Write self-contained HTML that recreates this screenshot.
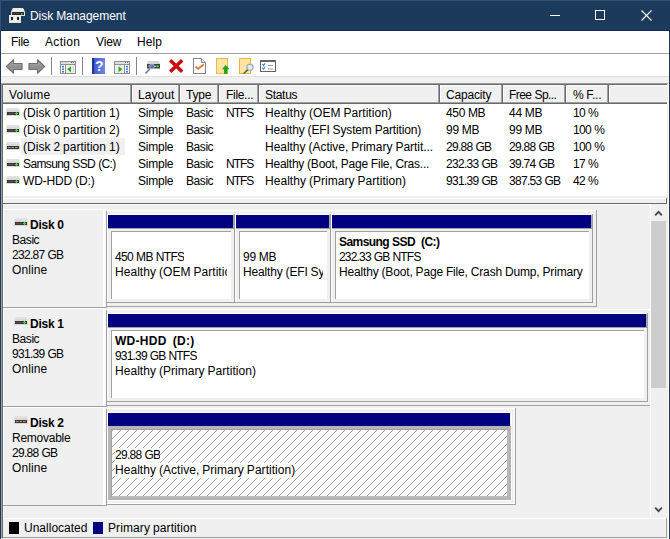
<!DOCTYPE html>
<html><head><meta charset="utf-8"><title>Disk Management</title>
<style>
html,body{margin:0;padding:0;}
body{width:670px;height:539px;position:relative;overflow:hidden;background:#f0f0f0;font-family:"Liberation Sans",sans-serif;font-size:12px;color:#000;}
.a{position:absolute;}
.t{position:absolute;white-space:pre;line-height:14px;height:14px;}
.b{font-weight:bold;}
#title{left:0;top:0;width:670px;height:31px;background:#1c3a5c;box-sizing:border-box;border-top:1px solid #36506f;border-left:1px solid #36506f;border-bottom:1px solid #102e54;}
#menu{left:1px;top:31px;width:668px;height:22px;background:#fff;}
#tool{left:1px;top:54px;width:668px;height:22px;background:#fff;}
.sep{position:absolute;top:57px;width:1px;height:18px;background:#868686;}
.hc{position:absolute;top:85px;height:17px;border-right:1px solid #a0a0a0;box-shadow:1px 0 0 #fff;box-sizing:border-box;}
.navy{position:absolute;background:#000080;height:13px;}
.pbox{position:absolute;background:#fff;border:1px solid #a0a0a0;box-sizing:border-box;}
.lab{position:absolute;left:4px;width:101px;height:96px;background:#f0f0f0;}
</style></head><body>

<div id="title" class="a"></div>
<svg class="a" style="left:8px;top:7px" width="18" height="17" viewBox="0 0 18 17">
<path d="M5 1h10l2 4v4H3V5z" fill="#e4e4e4"/><path d="M5 1h10l1.500 3.500h-13z" fill="#ececec"/><rect x="4" y="5" width="12" height="3" fill="#2e2b2b"/><rect x="6" y="6" width="1" height="1" fill="#3d6fb0"/><rect x="8" y="6" width="3" height="1" fill="#5a4a44"/><rect x="13" y="6" width="1.500" height="1.500" fill="#38e038"/>
<rect x="1" y="8" width="12" height="8" fill="#e6e6e6"/><rect x="1" y="8" width="12" height="1" fill="#f4f4f4"/><rect x="3" y="10" width="2" height="3" fill="#2a2420"/><rect x="9" y="10" width="2" height="3" fill="#2a2420"/><rect x="5.500" y="10" width="3" height="5" fill="#f2f2f2"/></svg>
<div class="t" style="left:30px;top:9px;color:#fff;font-size:12px;letter-spacing:-0.051px;word-spacing:-0.285px">Disk Management</div>
<div class="a" style="left:550px;top:15px;width:10px;height:1px;background:#fff"></div>
<div class="a" style="left:595px;top:10px;width:8px;height:8px;border:1px solid #fff"></div>
<svg class="a" style="left:641px;top:10px" width="11" height="11" viewBox="0 0 11 11"><path d="M0.5 0.5L10.5 10.5M10.5 0.5L0.5 10.5" stroke="#fff" stroke-width="1.1" fill="none"/></svg>
<div class="a" style="left:0;top:31px;width:1px;height:508px;background:#1b395b"></div><div class="a" style="left:669px;top:31px;width:1px;height:508px;background:#1b395b"></div>
<div id="menu" class="a"></div>
<div class="t" style="left:11px;top:35px;letter-spacing:-0.304px">File</div>
<div class="t" style="left:45px;top:35px;letter-spacing:0.314px">Action</div>
<div class="t" style="left:96px;top:35px;letter-spacing:-0.155px">View</div>
<div class="t" style="left:137px;top:35px;letter-spacing:0.122px">Help</div>
<div class="a" style="left:1px;top:53px;width:668px;height:1px;background:#a0a0a0"></div>
<div id="tool" class="a"></div>
<div class="sep" style="left:51px"></div>
<div class="sep" style="left:82px"></div>
<div class="sep" style="left:136px"></div>
<svg class="a" style="left:5px;top:58px" width="19" height="17" viewBox="0 0 19 17"><defs><linearGradient id="ga" x1="0" y1="0" x2="0" y2="1"><stop offset="0" stop-color="#b4b4b4"/><stop offset="0.55" stop-color="#8e8e8e"/><stop offset="1" stop-color="#a4a4a4"/></linearGradient></defs><path d="M8.500 1.800L1.500 8.500L8.500 15.200V11.500H17V5.500H8.500z" fill="url(#ga)" stroke="#707070" stroke-width="1.200" stroke-linejoin="round"/></svg>
<svg class="a" style="left:28px;top:58px" width="19" height="17" viewBox="0 0 19 17"><path d="M9.500 1.800L16.500 8.500L9.500 15.200V11.500H1V5.500H9.500z" fill="url(#ga)" stroke="#707070" stroke-width="1.200" stroke-linejoin="round"/></svg>
<svg class="a" style="left:60px;top:61px" width="16" height="13" viewBox="0 0 16 13"><rect x="0.500" y="0.500" width="15" height="12" fill="#fff" stroke="#8a918f"/><rect x="1" y="1" width="14" height="2" fill="#dedede"/><rect x="11" y="1" width="1" height="1" fill="#777"/><rect x="13" y="1" width="1" height="1" fill="#777"/><rect x="1" y="3" width="14" height="1" fill="#8a918f"/><rect x="5" y="4" width="1" height="8" fill="#8a918f"/><rect x="6" y="4" width="9" height="8" fill="#efefef"/><rect x="2" y="5" width="2" height="1.500" fill="#3a78d8"/><rect x="2" y="7.500" width="2" height="1.500" fill="#3a78d8"/><rect x="2" y="10" width="2" height="1.500" fill="#3a78d8"/><path d="M11 5.200v6l-3.800-3z" fill="#21aa21"/><rect x="13" y="5" width="1" height="6" fill="#d0d0d0"/></svg>
<svg class="a" style="left:92px;top:58px" width="13" height="16" viewBox="0 0 13 16"><defs><linearGradient id="gh" x1="0" y1="0" x2="1" y2="0"><stop offset="0" stop-color="#2a3c9e"/><stop offset="0.250" stop-color="#4460d0"/><stop offset="1" stop-color="#7088e4"/></linearGradient></defs><rect x="0" y="0" width="13" height="16" fill="url(#gh)"/><rect x="0" y="0" width="2" height="16" fill="#22349a"/><text x="7.200" y="12.800" font-family="Liberation Sans, sans-serif" font-size="14" font-weight="bold" fill="#f4f4ff" text-anchor="middle">?</text></svg>
<svg class="a" style="left:114px;top:61px" width="16" height="13" viewBox="0 0 16 13"><rect x="0.500" y="0.500" width="15" height="12" fill="#fff" stroke="#8a918f"/><rect x="1" y="1" width="14" height="2" fill="#dedede"/><rect x="11" y="1" width="1" height="1" fill="#777"/><rect x="13" y="1" width="1" height="1" fill="#777"/><rect x="1" y="3" width="14" height="1" fill="#8a918f"/><rect x="10" y="4" width="1" height="8" fill="#8a918f"/><rect x="1" y="4" width="9" height="8" fill="#efefef"/><rect x="12" y="5" width="2" height="1.500" fill="#3a78d8"/><rect x="12" y="7.500" width="2" height="1.500" fill="#3a78d8"/><rect x="12" y="10" width="2" height="1.500" fill="#3a78d8"/><path d="M4.500 5.200v6l3.800-3z" fill="#21aa21"/></svg>
<svg class="a" style="left:144px;top:60px" width="17" height="15" viewBox="0 0 17 15"><path d="M4 1h11l1 3h-13z" fill="#d6d6d6"/><rect x="3" y="4" width="13" height="4.500" fill="#3c3c3c"/><rect x="4" y="5" width="3" height="2" fill="#77808c"/><rect x="12.500" y="5.200" width="2.200" height="2" fill="#2fe02f"/><rect x="10" y="5.800" width="2" height="1" fill="#c8e8c8"/><circle cx="8" cy="6.500" r="2.400" fill="#5c86d8" fill-opacity="0.700" stroke="#a8b8d4" stroke-width="0.900"/><path d="M6 8.800L1.500 13.500" stroke="#6a7a90" stroke-width="1.500"/></svg>
<svg class="a" style="left:168px;top:58px" width="17" height="16" viewBox="0 0 17 16"><path d="M2.200 2.300L14.200 13.700M14.200 2.300L2.200 13.700" stroke="#cc0a0a" stroke-width="3.600" fill="none"/></svg>
<svg class="a" style="left:193px;top:58px" width="13" height="16" viewBox="0 0 13 16"><path d="M0.500 0.500H8.500L12.500 4.500V15.500H0.500z" fill="#fff" stroke="#858585"/><path d="M8.500 0.500V4.500H12.500" fill="#e8e8e8" stroke="#858585"/><path d="M2.500 8.500L5 10.800L10.800 6.500" stroke="#e8742a" stroke-width="1.700" fill="none"/></svg>
<svg class="a" style="left:216px;top:58px" width="14" height="16" viewBox="0 0 14 16"><rect x="0.500" y="0.500" width="11" height="15" fill="#fbe4a4" stroke="#ecb93c"/><path d="M9.700 7l3.800 4.300h-2.200V16h-3.200v-4.700h-2.200z" fill="#1fa31f"/></svg>
<svg class="a" style="left:239px;top:58px" width="16" height="17" viewBox="0 0 16 17"><rect x="0.500" y="0.500" width="11" height="15" fill="#fbe4a4" stroke="#ecb93c"/><circle cx="11" cy="9.200" r="3.100" fill="#dcecf4" stroke="#9aa2ac" stroke-width="1.100"/><path d="M8.800 11.600L4.500 15.800" stroke="#555a64" stroke-width="1.500"/></svg>
<svg class="a" style="left:260px;top:60px" width="16" height="12" viewBox="0 0 16 12"><rect x="0.500" y="0.500" width="15" height="11" fill="#fff" stroke="#646464"/><rect x="0" y="0" width="16" height="2" fill="#646464"/><path d="M2.500 4.200l1 1.300 1.600-2.300M2.500 7.700l1 1.300 1.600-2.300" stroke="#2a7fe0" stroke-width="1.100" fill="none"/><rect x="8" y="5" width="5" height="1" fill="#a0a0a0"/><rect x="8" y="8.500" width="5" height="1" fill="#a0a0a0"/></svg>
<div class="a" style="left:1px;top:76px;width:668px;height:1px;background:#dfdfdf"></div>
<div class="a" style="left:1px;top:83px;width:667px;height:1px;background:#a0a0a0"></div>
<div class="a" style="left:2px;top:84px;width:665px;height:1px;background:#696969"></div>
<div class="a" style="left:1px;top:83px;width:1px;height:455px;background:#a0a0a0"></div>
<div class="a" style="left:2px;top:84px;width:1px;height:454px;background:#696969"></div>
<div class="a" style="left:3px;top:85px;width:1px;height:452px;background:#fff"></div>
<div class="a" style="left:668px;top:84px;width:1px;height:454px;background:#fff"></div>
<div class="a" style="left:3px;top:85px;width:664px;height:19px;background:#f0f0f0"></div>
<div class="a" style="left:3px;top:85px;width:664px;height:1px;background:#fff"></div>
<div class="a" style="left:3px;top:102px;width:664px;height:1px;background:#a0a0a0"></div>
<div class="a" style="left:3px;top:103px;width:664px;height:1px;background:#696969"></div>
<div class="a" style="left:130px;top:85px;width:1px;height:17px;background:#a0a0a0"></div>
<div class="a" style="left:131px;top:85px;width:1px;height:18px;background:#696969"></div>
<div class="a" style="left:132px;top:85px;width:1px;height:17px;background:#fff"></div>
<div class="a" style="left:178px;top:85px;width:1px;height:17px;background:#a0a0a0"></div>
<div class="a" style="left:179px;top:85px;width:1px;height:18px;background:#696969"></div>
<div class="a" style="left:180px;top:85px;width:1px;height:17px;background:#fff"></div>
<div class="a" style="left:217px;top:85px;width:1px;height:17px;background:#a0a0a0"></div>
<div class="a" style="left:218px;top:85px;width:1px;height:18px;background:#696969"></div>
<div class="a" style="left:219px;top:85px;width:1px;height:17px;background:#fff"></div>
<div class="a" style="left:257px;top:85px;width:1px;height:17px;background:#a0a0a0"></div>
<div class="a" style="left:258px;top:85px;width:1px;height:18px;background:#696969"></div>
<div class="a" style="left:259px;top:85px;width:1px;height:17px;background:#fff"></div>
<div class="a" style="left:438px;top:85px;width:1px;height:17px;background:#a0a0a0"></div>
<div class="a" style="left:439px;top:85px;width:1px;height:18px;background:#696969"></div>
<div class="a" style="left:440px;top:85px;width:1px;height:17px;background:#fff"></div>
<div class="a" style="left:501px;top:85px;width:1px;height:17px;background:#a0a0a0"></div>
<div class="a" style="left:502px;top:85px;width:1px;height:18px;background:#696969"></div>
<div class="a" style="left:503px;top:85px;width:1px;height:17px;background:#fff"></div>
<div class="a" style="left:564px;top:85px;width:1px;height:17px;background:#a0a0a0"></div>
<div class="a" style="left:565px;top:85px;width:1px;height:18px;background:#696969"></div>
<div class="a" style="left:566px;top:85px;width:1px;height:17px;background:#fff"></div>
<div class="a" style="left:607px;top:85px;width:1px;height:17px;background:#a0a0a0"></div>
<div class="a" style="left:608px;top:85px;width:1px;height:18px;background:#696969"></div>
<div class="a" style="left:609px;top:85px;width:1px;height:17px;background:#fff"></div>
<div class="t" style="left:9px;top:88px;letter-spacing:0.228px">Volume</div>
<div class="t" style="left:138px;top:88px;letter-spacing:0.037px">Layout</div>
<div class="t" style="left:186px;top:88px;letter-spacing:-0.210px">Type</div>
<div class="t" style="left:226px;top:88px;letter-spacing:-0.308px">File...</div>
<div class="t" style="left:265px;top:88px;letter-spacing:-0.301px">Status</div>
<div class="t" style="left:446px;top:88px;letter-spacing:-0.172px">Capacity</div>
<div class="t" style="left:509px;top:88px;letter-spacing:-0.558px;word-spacing:0.222px">Free Sp...</div>
<div class="t" style="left:573px;top:88px;letter-spacing:-0.297px;word-spacing:-0.039px">% F...</div>
<div class="a" style="left:4px;top:104px;width:664px;height:92px;background:#fff"></div>
<svg style="position:absolute;left:6px;top:108px" width="14" height="8" viewBox="0 0 14 8"><path d="M1 0h12l1 4v4H0V4z" fill="#d8d8d8"/><path d="M1.500 0h11l0.500 2h-12z" fill="#e2e2e2"/><rect x="1" y="4" width="12" height="3" fill="#3f3632"/><rect x="2" y="5" width="6" height="1" fill="#5a4e48"/><rect x="9" y="5" width="3" height="1" fill="#35e335"/><rect x="10" y="4" width="1" height="3" fill="#35e335"/></svg>
<div class="t" style="left:23px;top:106px;letter-spacing:0.018px;word-spacing:-0.354px">(Disk 0 partition 1)</div>
<div class="t" style="left:138px;top:106px;letter-spacing:-0.240px">Simple</div>
<div class="t" style="left:186px;top:106px;letter-spacing:-0.431px">Basic</div>
<div class="t" style="left:226px;top:106px;letter-spacing:-1.039px">NTFS</div>
<div class="t" style="left:265px;top:106px;letter-spacing:0.041px;word-spacing:-0.377px">Healthy (OEM Partition)</div>
<div class="t" style="left:446px;top:106px;letter-spacing:-0.350px;word-spacing:0.014px">450 MB</div>
<div class="t" style="left:509px;top:106px;letter-spacing:-0.280px;word-spacing:-0.056px">44 MB</div>
<div class="t" style="left:573px;top:106px;letter-spacing:-0.616px;word-spacing:0.280px">10 %</div>
<svg style="position:absolute;left:6px;top:125px" width="14" height="8" viewBox="0 0 14 8"><path d="M1 0h12l1 4v4H0V4z" fill="#d8d8d8"/><path d="M1.500 0h11l0.500 2h-12z" fill="#e2e2e2"/><rect x="1" y="4" width="12" height="3" fill="#3f3632"/><rect x="2" y="5" width="6" height="1" fill="#5a4e48"/><rect x="9" y="5" width="3" height="1" fill="#35e335"/><rect x="10" y="4" width="1" height="3" fill="#35e335"/></svg>
<div class="t" style="left:23px;top:123px;letter-spacing:0.018px;word-spacing:-0.354px">(Disk 0 partition 2)</div>
<div class="t" style="left:138px;top:123px;letter-spacing:-0.240px">Simple</div>
<div class="t" style="left:186px;top:123px;letter-spacing:-0.431px">Basic</div>
<div class="t" style="left:265px;top:123px;letter-spacing:-0.159px;word-spacing:-0.177px">Healthy (EFI System Partition)</div>
<div class="t" style="left:446px;top:123px;letter-spacing:-0.280px;word-spacing:-0.056px">99 MB</div>
<div class="t" style="left:509px;top:123px;letter-spacing:-0.280px;word-spacing:-0.056px">99 MB</div>
<div class="t" style="left:573px;top:123px;letter-spacing:-0.620px;word-spacing:0.284px">100 %</div>
<div class="a" style="left:21px;top:138px;width:104px;height:17px;background:#f0f0f0"></div>
<svg style="position:absolute;left:6px;top:142px" width="14" height="8" viewBox="0 0 14 8"><path d="M1 0h12l1 4v4H0V4z" fill="#d8d8d8"/><path d="M1.500 0h11l0.500 2h-12z" fill="#e2e2e2"/><rect x="1" y="4" width="12" height="3" fill="#3f3632"/><rect x="2" y="5" width="2.500" height="1" fill="#9a9a9a"/><rect x="5.500" y="5" width="2.500" height="1" fill="#9a9a9a"/><rect x="9" y="5" width="2.500" height="1" fill="#9a9a9a"/></svg>
<div class="t" style="left:23px;top:140px;letter-spacing:0.018px;word-spacing:-0.354px">(Disk 2 partition 1)</div>
<div class="t" style="left:138px;top:140px;letter-spacing:-0.240px">Simple</div>
<div class="t" style="left:186px;top:140px;letter-spacing:-0.431px">Basic</div>
<div class="t" style="left:265px;top:140px;letter-spacing:-0.028px;word-spacing:-0.308px">Healthy (Active, Primary Partit...</div>
<div class="t" style="left:446px;top:140px;letter-spacing:-0.722px;word-spacing:0.386px">29.88 GB</div>
<div class="t" style="left:509px;top:140px;letter-spacing:-0.722px;word-spacing:0.386px">29.88 GB</div>
<div class="t" style="left:573px;top:140px;letter-spacing:-0.620px;word-spacing:0.284px">100 %</div>
<svg style="position:absolute;left:6px;top:159px" width="14" height="8" viewBox="0 0 14 8"><path d="M1 0h12l1 4v4H0V4z" fill="#d8d8d8"/><path d="M1.500 0h11l0.500 2h-12z" fill="#e2e2e2"/><rect x="1" y="4" width="12" height="3" fill="#3f3632"/><rect x="2" y="5" width="6" height="1" fill="#5a4e48"/><rect x="9" y="5" width="3" height="1" fill="#35e335"/><rect x="10" y="4" width="1" height="3" fill="#35e335"/></svg>
<div class="t" style="left:23px;top:157px;letter-spacing:-0.623px;word-spacing:0.287px">Samsung SSD (C:)</div>
<div class="t" style="left:138px;top:157px;letter-spacing:-0.240px">Simple</div>
<div class="t" style="left:186px;top:157px;letter-spacing:-0.431px">Basic</div>
<div class="t" style="left:226px;top:157px;letter-spacing:-1.039px">NTFS</div>
<div class="t" style="left:265px;top:157px;letter-spacing:-0.227px;word-spacing:-0.109px">Healthy (Boot, Page File, Cras...</div>
<div class="t" style="left:446px;top:157px;letter-spacing:-0.710px;word-spacing:0.374px">232.33 GB</div>
<div class="t" style="left:509px;top:157px;letter-spacing:-0.722px;word-spacing:0.386px">39.74 GB</div>
<div class="t" style="left:573px;top:157px;letter-spacing:-0.616px;word-spacing:0.280px">17 %</div>
<svg style="position:absolute;left:6px;top:176px" width="14" height="8" viewBox="0 0 14 8"><path d="M1 0h12l1 4v4H0V4z" fill="#d8d8d8"/><path d="M1.500 0h11l0.500 2h-12z" fill="#e2e2e2"/><rect x="1" y="4" width="12" height="3" fill="#3f3632"/><rect x="2" y="5" width="6" height="1" fill="#5a4e48"/><rect x="9" y="5" width="3" height="1" fill="#35e335"/><rect x="10" y="4" width="1" height="3" fill="#35e335"/></svg>
<div class="t" style="left:23px;top:174px;letter-spacing:-0.148px;word-spacing:-0.188px">WD-HDD (D:)</div>
<div class="t" style="left:138px;top:174px;letter-spacing:-0.240px">Simple</div>
<div class="t" style="left:186px;top:174px;letter-spacing:-0.431px">Basic</div>
<div class="t" style="left:226px;top:174px;letter-spacing:-1.039px">NTFS</div>
<div class="t" style="left:265px;top:174px;letter-spacing:0.038px;word-spacing:-0.374px">Healthy (Primary Partition)</div>
<div class="t" style="left:446px;top:174px;letter-spacing:-0.710px;word-spacing:0.374px">931.39 GB</div>
<div class="t" style="left:509px;top:174px;letter-spacing:-0.710px;word-spacing:0.374px">387.53 GB</div>
<div class="t" style="left:573px;top:174px;letter-spacing:-0.616px;word-spacing:0.280px">42 %</div>
<div class="a" style="left:4px;top:198px;width:662px;height:1px;background:#fff"></div>
<div class="a" style="left:3px;top:203px;width:664px;height:1px;background:#696969"></div>
<div class="a" style="left:666px;top:198px;width:1px;height:6px;background:#696969"></div>
<div class="a" style="left:4px;top:204px;width:646px;height:1px;background:#fff"></div>
<div class="a" style="left:4px;top:209px;width:102px;height:1px;background:#fff"></div>
<div class="a" style="left:3px;top:307px;width:104px;height:1px;background:#a0a0a0"></div>
<div class="a" style="left:103px;top:210px;width:1px;height:97px;background:#fff"></div>
<div class="a" style="left:104px;top:210px;width:1px;height:97px;background:#fff"></div>
<div class="a" style="left:105px;top:210px;width:1px;height:97px;background:#f7f7f7"></div>
<div class="a" style="left:106px;top:211px;width:1px;height:97px;background:#a0a0a0"></div>
<div class="a" style="left:107px;top:210px;width:489px;height:1px;background:#fff"></div>
<div class="a" style="left:107px;top:306px;width:490px;height:1px;background:#a0a0a0"></div>
<div class="a" style="left:596px;top:210px;width:1px;height:97px;background:#a0a0a0"></div>
<svg style="position:absolute;left:14px;top:218px" width="14" height="8" viewBox="0 0 14 8"><path d="M1 0h12l1 4v4H0V4z" fill="#d8d8d8"/><path d="M1.500 0h11l0.500 2h-12z" fill="#e2e2e2"/><rect x="1" y="4" width="12" height="3" fill="#3f3632"/><rect x="2" y="5" width="6" height="1" fill="#5a4e48"/><rect x="9" y="5" width="3" height="1" fill="#35e335"/><rect x="10" y="4" width="1" height="3" fill="#35e335"/></svg>
<div class="t b" style="left:30px;top:218px;letter-spacing:-0.265px;word-spacing:-0.071px">Disk 0</div>
<div class="t" style="left:12px;top:233px;letter-spacing:-0.431px">Basic</div>
<div class="t" style="left:12px;top:248px;letter-spacing:-0.710px;word-spacing:0.374px">232.87 GB</div>
<div class="t" style="left:12px;top:263px;letter-spacing:0.093px">Online</div>
<div class="a" style="left:4px;top:308px;width:102px;height:1px;background:#fff"></div>
<div class="a" style="left:3px;top:406px;width:104px;height:1px;background:#a0a0a0"></div>
<div class="a" style="left:103px;top:309px;width:1px;height:97px;background:#fff"></div>
<div class="a" style="left:104px;top:309px;width:1px;height:97px;background:#fff"></div>
<div class="a" style="left:105px;top:309px;width:1px;height:97px;background:#f7f7f7"></div>
<div class="a" style="left:106px;top:310px;width:1px;height:97px;background:#a0a0a0"></div>
<div class="a" style="left:107px;top:309px;width:544px;height:1px;background:#fff"></div>
<div class="a" style="left:107px;top:405px;width:545px;height:1px;background:#a0a0a0"></div>
<svg style="position:absolute;left:14px;top:317px" width="14" height="8" viewBox="0 0 14 8"><path d="M1 0h12l1 4v4H0V4z" fill="#d8d8d8"/><path d="M1.500 0h11l0.500 2h-12z" fill="#e2e2e2"/><rect x="1" y="4" width="12" height="3" fill="#3f3632"/><rect x="2" y="5" width="6" height="1" fill="#5a4e48"/><rect x="9" y="5" width="3" height="1" fill="#35e335"/><rect x="10" y="4" width="1" height="3" fill="#35e335"/></svg>
<div class="t b" style="left:30px;top:317px;letter-spacing:-0.265px;word-spacing:-0.071px">Disk 1</div>
<div class="t" style="left:12px;top:332px;letter-spacing:-0.431px">Basic</div>
<div class="t" style="left:12px;top:347px;letter-spacing:-0.710px;word-spacing:0.374px">931.39 GB</div>
<div class="t" style="left:12px;top:362px;letter-spacing:0.093px">Online</div>
<div class="a" style="left:4px;top:407px;width:102px;height:1px;background:#fff"></div>
<div class="a" style="left:3px;top:505px;width:104px;height:1px;background:#a0a0a0"></div>
<div class="a" style="left:103px;top:408px;width:1px;height:97px;background:#fff"></div>
<div class="a" style="left:104px;top:408px;width:1px;height:97px;background:#fff"></div>
<div class="a" style="left:105px;top:408px;width:1px;height:97px;background:#f7f7f7"></div>
<div class="a" style="left:106px;top:409px;width:1px;height:97px;background:#a0a0a0"></div>
<div class="a" style="left:107px;top:408px;width:408px;height:1px;background:#fff"></div>
<div class="a" style="left:107px;top:504px;width:409px;height:1px;background:#a0a0a0"></div>
<div class="a" style="left:515px;top:408px;width:1px;height:97px;background:#a0a0a0"></div>
<svg style="position:absolute;left:14px;top:416px" width="14" height="8" viewBox="0 0 14 8"><path d="M1 0h12l1 4v4H0V4z" fill="#d8d8d8"/><path d="M1.500 0h11l0.500 2h-12z" fill="#e2e2e2"/><rect x="1" y="4" width="12" height="3" fill="#3f3632"/><rect x="2" y="5" width="2.500" height="1" fill="#9a9a9a"/><rect x="5.500" y="5" width="2.500" height="1" fill="#9a9a9a"/><rect x="9" y="5" width="2.500" height="1" fill="#9a9a9a"/></svg>
<div class="t b" style="left:30px;top:416px;letter-spacing:-0.265px;word-spacing:-0.071px">Disk 2</div>
<div class="t" style="left:12px;top:431px;letter-spacing:-0.255px">Removable</div>
<div class="t" style="left:12px;top:446px;letter-spacing:-0.722px;word-spacing:0.386px">29.88 GB</div>
<div class="t" style="left:12px;top:461px;letter-spacing:0.093px">Online</div>
<div class="a" style="left:107px;top:214px;width:1px;height:89px;background:#fff"></div>
<div class="a" style="left:107px;top:214px;width:127px;height:1px;background:#fff"></div>
<div class="a" style="left:234px;top:214px;width:1px;height:89px;background:#a0a0a0"></div>
<div class="a" style="left:107px;top:302px;width:128px;height:1px;background:#a0a0a0"></div>
<div class="navy" style="left:108px;top:215px;width:125px"></div>
<div class="a" style="left:233px;top:215px;width:1px;height:14px;background:#a8a8a4"></div>
<div class="a" style="left:108px;top:228px;width:126px;height:1px;background:#a0a0a0"></div>
<div class="a" style="left:111px;top:231px;width:120px;height:68px;box-sizing:border-box;background:#fff;border-top:1px solid #a0a0a0;border-left:1px solid #a0a0a0"></div>
<div class="t" style="left:115px;top:250px;max-width:112px;overflow:hidden;letter-spacing:-0.653px;word-spacing:0.317px">450 MB NTFS</div>
<div class="t" style="left:115px;top:265px;max-width:112px;overflow:hidden;letter-spacing:0.041px;word-spacing:-0.377px">Healthy (OEM Partition)</div>
<div class="a" style="left:235px;top:214px;width:1px;height:89px;background:#fff"></div>
<div class="a" style="left:235px;top:214px;width:95px;height:1px;background:#fff"></div>
<div class="a" style="left:330px;top:214px;width:1px;height:89px;background:#a0a0a0"></div>
<div class="a" style="left:235px;top:302px;width:96px;height:1px;background:#a0a0a0"></div>
<div class="navy" style="left:236px;top:215px;width:93px"></div>
<div class="a" style="left:329px;top:215px;width:1px;height:14px;background:#a8a8a4"></div>
<div class="a" style="left:236px;top:228px;width:94px;height:1px;background:#a0a0a0"></div>
<div class="a" style="left:239px;top:231px;width:88px;height:68px;box-sizing:border-box;background:#fff;border-top:1px solid #a0a0a0;border-left:1px solid #a0a0a0"></div>
<div class="t" style="left:243px;top:250px;max-width:80px;overflow:hidden;letter-spacing:-0.280px;word-spacing:-0.056px">99 MB</div>
<div class="t" style="left:243px;top:265px;max-width:80px;overflow:hidden;letter-spacing:-0.159px;word-spacing:-0.177px">Healthy (EFI System Partition)</div>
<div class="a" style="left:331px;top:214px;width:1px;height:89px;background:#fff"></div>
<div class="a" style="left:331px;top:214px;width:261px;height:1px;background:#fff"></div>
<div class="a" style="left:592px;top:214px;width:1px;height:89px;background:#a0a0a0"></div>
<div class="a" style="left:331px;top:302px;width:262px;height:1px;background:#a0a0a0"></div>
<div class="navy" style="left:332px;top:215px;width:259px"></div>
<div class="a" style="left:591px;top:215px;width:1px;height:14px;background:#a8a8a4"></div>
<div class="a" style="left:332px;top:228px;width:260px;height:1px;background:#a0a0a0"></div>
<div class="a" style="left:335px;top:231px;width:254px;height:68px;box-sizing:border-box;background:#fff;border-top:1px solid #a0a0a0;border-left:1px solid #a0a0a0"></div>
<div class="t b" style="left:339px;top:235px;max-width:246px;overflow:hidden;letter-spacing:-0.560px;word-spacing:0.224px">Samsung SSD  (C:)</div>
<div class="t" style="left:339px;top:250px;max-width:246px;overflow:hidden;letter-spacing:-0.817px;word-spacing:0.481px">232.33 GB NTFS</div>
<div class="t" style="left:339px;top:265px;max-width:246px;overflow:hidden;letter-spacing:-0.164px;word-spacing:-0.172px">Healthy (Boot, Page File, Crash Dump, Primary</div>
<div class="a" style="left:107px;top:313px;width:1px;height:89px;background:#fff"></div>
<div class="a" style="left:107px;top:313px;width:540px;height:1px;background:#fff"></div>
<div class="a" style="left:647px;top:313px;width:1px;height:89px;background:#a0a0a0"></div>
<div class="a" style="left:107px;top:401px;width:541px;height:1px;background:#a0a0a0"></div>
<div class="navy" style="left:108px;top:314px;width:538px"></div>
<div class="a" style="left:646px;top:314px;width:1px;height:14px;background:#a8a8a4"></div>
<div class="a" style="left:108px;top:327px;width:539px;height:1px;background:#a0a0a0"></div>
<div class="a" style="left:111px;top:330px;width:533px;height:68px;box-sizing:border-box;background:#fff;border-top:1px solid #a0a0a0;border-left:1px solid #a0a0a0"></div>
<div class="t b" style="left:115px;top:334px;max-width:525px;overflow:hidden;letter-spacing:0.286px;word-spacing:-0.622px">WD-HDD  (D:)</div>
<div class="t" style="left:115px;top:349px;max-width:525px;overflow:hidden;letter-spacing:-0.817px;word-spacing:0.481px">931.39 GB NTFS</div>
<div class="t" style="left:115px;top:364px;max-width:525px;overflow:hidden;letter-spacing:0.038px;word-spacing:-0.374px">Healthy (Primary Partition)</div>
<div class="a" style="left:107px;top:412px;width:1px;height:89px;background:#fff"></div>
<div class="a" style="left:107px;top:412px;width:404px;height:1px;background:#fff"></div>
<div class="a" style="left:511px;top:412px;width:1px;height:89px;background:#fff"></div>
<div class="a" style="left:107px;top:500px;width:405px;height:1px;background:#fff"></div>
<div class="a" style="left:514px;top:409px;width:1px;height:95px;background:#fff"></div>
<div class="a" style="left:107px;top:503px;width:408px;height:1px;background:#fff"></div>
<div class="navy" style="left:108px;top:413px;width:402px"></div>
<div class="a" style="left:108px;top:426px;width:403px;height:74px;box-sizing:border-box;border:3px solid #b6b6b6;background:#fff"></div>
<div class="a" style="left:111px;top:429px;width:397px;height:1px;background:#a0a0a0"></div>
<div class="a" style="left:111px;top:429px;width:1px;height:68px;background:#a0a0a0"></div>
<svg class="a" style="left:112px;top:430px" width="396" height="67" viewBox="0 0 396 67"><defs><pattern id="hb" width="8" height="8" patternUnits="userSpaceOnUse"><path d="M-1 2L2 -1M0 9L9 0" stroke="#9e9e9e" stroke-width="1" fill="none"/></pattern></defs><rect x="0" y="0" width="396" height="67" fill="url(#hb)"/></svg>
<div class="a" style="left:112px;top:496px;width:396px;height:1px;background:#bcbcbc"></div>
<div class="a" style="left:507px;top:430px;width:1px;height:67px;background:#bcbcbc"></div>
<div class="t" style="left:115px;top:448px;max-width:389px;overflow:hidden;background:#fff;height:15px;letter-spacing:-0.722px;word-spacing:0.386px">29.88 GB</div>
<div class="t" style="left:115px;top:463px;max-width:389px;overflow:hidden;background:#fff;height:15px;letter-spacing:0.038px;word-spacing:-0.374px">Healthy (Active, Primary Partition)</div>
<div class="a" style="left:650px;top:204px;width:18px;height:313px;background:#f0f0f0"></div>
<div class="a" style="left:650px;top:204px;width:1px;height:313px;background:#fff"></div>
<div class="a" style="left:651px;top:221px;width:15px;height:167px;background:#cdcdcd"></div>
<svg class="a" style="left:654px;top:209px" width="9" height="8" viewBox="0 0 9 8"><path d="M1.200 6.300L4.500 2.800L7.800 6.300" stroke="#4a4644" stroke-width="1.800" fill="none"/></svg>
<svg class="a" style="left:654px;top:506px" width="9" height="8" viewBox="0 0 9 8"><path d="M1.200 1.700L4.500 5.200L7.800 1.700" stroke="#4a4644" stroke-width="1.800" fill="none"/></svg>
<div class="a" style="left:3px;top:517px;width:665px;height:22px;background:#f0f0f0"></div>
<div class="a" style="left:3px;top:518px;width:664px;height:1px;background:#fff"></div>
<div class="a" style="left:3px;top:537px;width:664px;height:1px;background:#a0a0a0"></div>
<div class="a" style="left:666px;top:518px;width:1px;height:20px;background:#a0a0a0"></div>
<div class="a" style="left:1px;top:538px;width:668px;height:1px;background:#f0f0f0"></div>
<div class="a" style="left:9px;top:522px;width:10px;height:12px;background:#000"></div>
<div class="t" style="left:24px;top:521px;letter-spacing:0.006px">Unallocated</div>
<div class="a" style="left:93px;top:522px;width:10px;height:12px;background:#000080"></div>
<div class="t" style="left:108px;top:521px;letter-spacing:0.100px;word-spacing:-0.436px">Primary partition</div>
<div class="a" style="left:667px;top:85px;width:1px;height:453px;background:#f0f0f0"></div>
<div class="a" style="left:668px;top:84px;width:1px;height:454px;background:#fff"></div>
</body></html>
